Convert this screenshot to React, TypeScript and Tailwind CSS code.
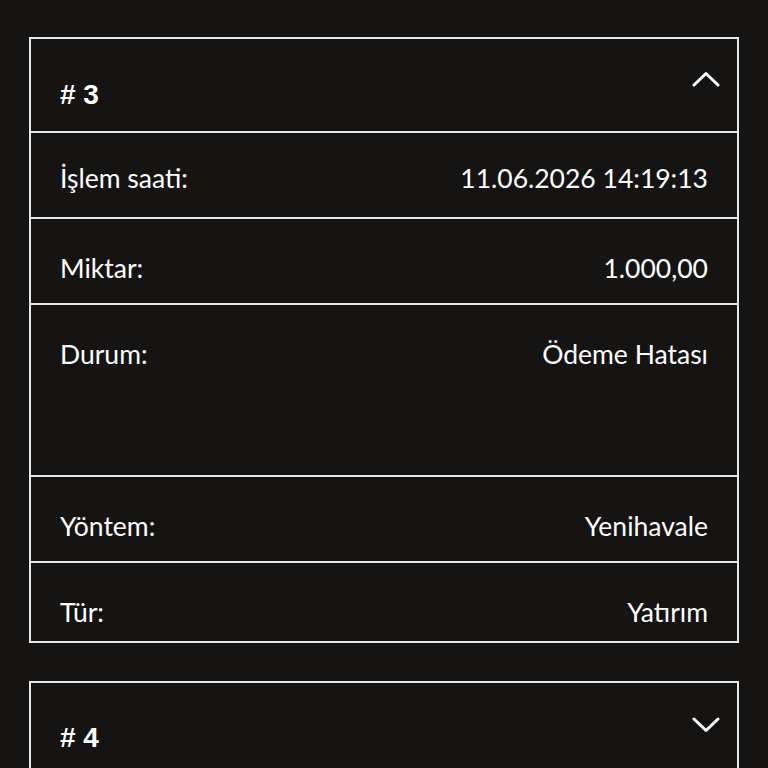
import React from "react";

const Chevron = ({ up }: { up?: boolean }) => (
  <svg width="28" height="16" viewBox="0 0 28 16" fill="none" className="block">
    <path
      d={up ? "M2 14 L14 2.5 L26 14" : "M2 2 L14 13.5 L26 2"}
      stroke="#ffffff"
      strokeWidth="3"
      strokeLinecap="round"
      strokeLinejoin="round"
    />
  </svg>
);

const rows = [
  { label: "İşlem saati:", value: "11.06.2026 14:19:13", h: "h-[86px] pt-[27px]" },
  { label: "Miktar:", value: "1.000,00", h: "h-[86px] pt-[31px]" },
  { label: "Durum:", value: "Ödeme Hatası", h: "h-[172px] pt-[31px]" },
  { label: "Yöntem:", value: "Yenihavale", h: "h-[86px] pt-[31px]" },
  { label: "Tür:", value: "Yatırım", h: "h-[80px] pt-[31px]" },
];

export default function App() {
  return (
    <div className="w-[768px] h-[768px] overflow-hidden bg-[#161413] px-[29px] pt-[37px]">
      <div className="border-2 border-[#e6e6e6]">
        <div className="h-[92px] flex justify-between pl-[29px] pr-[17px]">
          <div
            className="pt-[41px] text-[28px] leading-[30px] font-bold text-white"
            style={{ fontFamily: '"Liberation Sans", Arial, sans-serif' }}
          >
            # 3
          </div>
          <div className="pt-[32px]">
            <Chevron up />
          </div>
        </div>
        {rows.map((r) => (
          <div
            key={r.label}
            className={`${r.h} border-t-2 border-[#e6e6e6] flex justify-between items-start px-[29px] text-[26.5px] leading-[36px] text-white`}
            style={{ fontFamily: 'Lato, "Noto Sans", sans-serif' }}
          >
            <span>{r.label}</span>
            <span>{r.value}</span>
          </div>
        ))}
      </div>
      <div className="mt-[38px] border-2 border-[#e6e6e6] h-[200px]">
        <div className="h-[91px] flex justify-between pl-[29px] pr-[17px]">
          <div
            className="pt-[40px] text-[28px] leading-[30px] font-bold text-white"
            style={{ fontFamily: '"Liberation Sans", Arial, sans-serif' }}
          >
            # 4
          </div>
          <div className="pt-[34px]">
            <Chevron />
          </div>
        </div>
      </div>
    </div>
  );
}
